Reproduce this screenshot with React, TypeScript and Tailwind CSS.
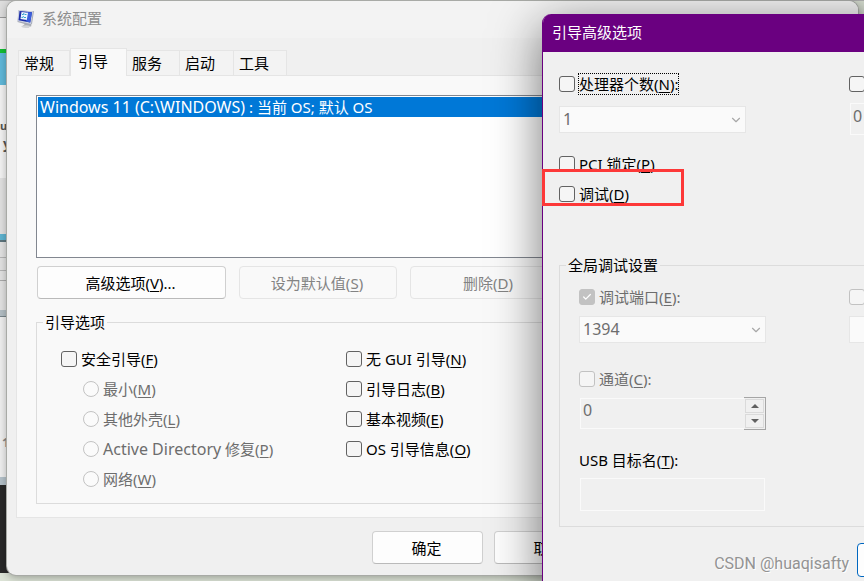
import { useId, type ReactNode } from "react";
import { Check, ChevronDown, X } from "lucide-react";

const strips = [
  "h-[17px] bg-[#dedede]",
  "h-px bg-[#9a9a9a]",
  "h-[31px] bg-[#efefef]",
  "h-[4px] bg-[#13bf33]",
  "h-[32px] bg-[#60b9da]",
  "h-[93px] bg-[#f4f4f4]",
  "h-[56px] bg-[#e2e2e2]",
  "h-[6px] bg-[#5fb4d1]",
  "h-[2px] bg-[#5d757d]",
  "h-[15px] bg-[#e3e3e3]",
  "h-px bg-[#b5b5b5]",
  "h-[12px] bg-[#e3e3e3]",
  "h-px bg-[#b5b5b5]",
  "h-[9px] bg-[#e3e3e3]",
  "h-px bg-[#aaaaaa]",
  "h-[29px] bg-[#e3e3e3]",
  "h-[6px] bg-[#b4bfc5]",
  "h-px bg-[#78858b]",
  "h-[160px] bg-[#f0f0f0]",
  "h-[8px] bg-[#b5c2ca]",
  "h-[88px] bg-[#292929]",
];

function Label({ text, hot, end = "" }: { text: ReactNode; hot?: string; end?: string }) {
  return (
    <span className="whitespace-pre">
      {text}
      {hot && (
        <>
          (<u className="underline decoration-1 underline-offset-2">{hot}</u>)
        </>
      )}
      {end}
    </span>
  );
}

type OptionProps = {
  children?: ReactNode;
  disabled?: boolean;
  checked?: boolean;
  focused?: boolean;
  name?: string;
};

function CheckOption({ children, disabled, checked, focused, name }: OptionProps) {
  const id = useId();
  return (
    <div className="flex h-[30px] items-center gap-1">
      <span className="relative flex size-4 shrink-0">
        <input
          id={id}
          type="checkbox"
          disabled={disabled}
          defaultChecked={checked}
          aria-label={name}
          className="size-4 appearance-none rounded-[3px] border border-[#626262] bg-[#f5f5f5] checked:border-[#c2c2c2] checked:bg-[#c2c2c2] disabled:border-[#c2c2c2]"
        />
        {checked && <Check className="pointer-events-none absolute inset-[3px] size-[10px] text-white" strokeWidth={3} />}
      </span>
      <label
        htmlFor={id}
        className={`-ml-px border border-dotted leading-5 ${focused ? "border-black" : "border-transparent"} ${disabled ? "text-[#6d6d6d]" : "text-black"}`}
      >
        {children}
      </label>
    </div>
  );
}

function RadioOption({ children }: { children: ReactNode }) {
  const id = useId();
  return (
    <div className="flex h-[30px] items-center gap-1 pl-[22px]">
      <input id={id} type="radio" name="safe-boot" disabled className="size-4 appearance-none rounded-full border border-[#c3c3c3] bg-[#fbfbfb]" />
      <label htmlFor={id} className="text-[#6d6d6d]">
        {children}
      </label>
    </div>
  );
}

function Combo({ value, name }: { value: string; name: string }) {
  return (
    <div className="relative w-[187px]">
      <select
        aria-label={name}
        disabled
        className="block h-[27px] w-full appearance-none border border-[#e6e6e6] bg-[#fafafa] pb-[2px] pl-[3px] text-base leading-5 text-[#6d6d6d] opacity-100"
      >
        <option>{value}</option>
      </select>
      <ChevronDown className="pointer-events-none absolute top-[7px] right-[3px] size-[14px] text-[#a8a8a8]" strokeWidth={2} />
    </div>
  );
}

function PushButton({ children, width, disabled }: { children: ReactNode; width: string; disabled?: boolean }) {
  return (
    <button
      type="button"
      disabled={disabled}
      className={`h-[33px] shrink-0 rounded-[4px] border pr-[2px] ${width} ${disabled ? "border-[#e5e5e5] bg-[#f9f9f9] text-[#838383]" : "border-[#d0d0d0] border-b-[#bababa] bg-[#fdfdfd] text-black"}`}
    >
      {children}
    </button>
  );
}

function MonitorIcon() {
  return (
    <svg viewBox="0 0 18 20" className="h-5 w-[18px]" aria-hidden="true">
      <path d="M9 14l4.500 1 1 2-3 1.500-6-1.500z" fill="#a9acb0" />
      <path d="M4 17.500q4-2 10-.5l-3 2q-5 0-7-1.500z" fill="#d2d4d7" />
      <path d="M1.500 1L15 2.500 17 2l-2 13-2 1.500L.5 13z" fill="#a6aab5" />
      <path d="M1.500 1L16 2.500l-2 12.500L.5 12z" fill="#cfd5e4" />
      <path d="M2.500 2L15 3.300l-1.800 10.200L1.500 11.300z" fill="#1d2ea8" />
      <path d="M10 3l5 .4-1.800 10-4.200-.8z" fill="#3c60dc" />
      <path d="M4.500 3l6.500.7-1.200 7.300-6.300-1z" fill="#eef7ff" />
      <path d="M5 5l1 1 1-2M4.500 8l1 1 1-2M7.500 5.500h2M7 8.500h2" stroke="#37a2cf" fill="none" />
    </svg>
  );
}

function Tab({ children, width, active }: { children: ReactNode; width: string; active?: boolean }) {
  return (
    <button
      type="button"
      role="tab"
      aria-selected={!!active}
      className={`border border-b-0 border-[#e5e5e5] text-left ${width} ${active ? "z-10 -mb-px h-[28px] bg-[#f9f9f9] pb-[3px] pl-[7px]" : "h-[25px] border-l-0 bg-[#f3f3f3] pl-[5px] first:border-l"}`}
    >
      {children}
    </button>
  );
}

function ConfigWindow() {
  return (
    <section className="absolute top-px right-[6px] left-[7px] overflow-hidden rounded-[9px] bg-[#f0f0f0] shadow-[0_2px_10px_rgba(0,0,0,0.35)] ring-1 ring-[#a8aaa6]">
      <header className="flex h-[37px] items-center bg-[#f3f3f3] pr-[14px] pb-[2px] pl-[10px] text-[#8e8e8e]">
        <MonitorIcon />
        <h1 className="ml-[7px] flex-1 pb-px">系统配置</h1>
        <button type="button" aria-label="关闭">
          <X size={16} strokeWidth={1} />
        </button>
      </header>
      <div className="px-[9px] pt-[10px] pb-[11px]">
        <div role="tablist" className="relative flex items-end pl-[2px]">
          <Tab width="w-[52px]">常规</Tab>
          <Tab width="w-[57px]" active>引导</Tab>
          <Tab width="w-[53px]">服务</Tab>
          <Tab width="w-[54px]">启动</Tab>
          <Tab width="w-[53px]">工具</Tab>
        </div>
        <div className="border border-[#e5e5e5] bg-[#f9f9f9] px-[19px] pt-[19px] pb-[13px]">
          <ul role="listbox" aria-label="操作系统" className="h-[163px] border border-[#828790] bg-white p-px">
            <li role="option" aria-selected="true" className="h-5 bg-[#0078d7] pl-[2px] leading-5 whitespace-pre text-white">
              <span className="text-base leading-5">Windows 11 (C:\WINDOWS)</span> : 当前 OS; 默认 OS
            </li>
          </ul>
          <div className="flex gap-[13px] pt-2 pl-px">
            <PushButton width="w-[189px]"><Label text="高级选项" hot="V" end="..." /></PushButton>
            <PushButton width="w-[158px]" disabled><Label text="设为默认值" hot="S" /></PushButton>
            <PushButton width="w-[158px]" disabled><Label text="删除" hot="D" /></PushButton>
          </div>
          <fieldset className="mt-[13px] flex border border-[#dcdcdc] pb-[9px] pl-6">
            <legend className="-ml-[18px] px-[2px] leading-5">引导选项</legend>
            <div className="w-[285px] pt-3">
              <CheckOption><Label text="安全引导" hot="F" /></CheckOption>
              <RadioOption><Label text="最小" hot="M" /></RadioOption>
              <RadioOption><Label text="其他外壳" hot="L" /></RadioOption>
              <RadioOption>
                <Label text={<><span className="text-base leading-5">Active Directory</span> 修复</>} hot="P" />
              </RadioOption>
              <RadioOption><Label text="网络" hot="W" /></RadioOption>
            </div>
            <div className="pt-3">
              <CheckOption><Label text="无 GUI 引导" hot="N" /></CheckOption>
              <CheckOption><Label text="引导日志" hot="B" /></CheckOption>
              <CheckOption><Label text="基本视频" hot="E" /></CheckOption>
              <CheckOption><Label text="OS 引导信息" hot="O" /></CheckOption>
            </div>
          </fieldset>
        </div>
        <div className="flex gap-[11px] pt-[13px] pl-[356px]">
          <PushButton width="w-[111px]">确定</PushButton>
          <PushButton width="w-[111px]">取消</PushButton>
        </div>
      </div>
    </section>
  );
}

function AdvancedDialog() {
  return (
    <section className="absolute top-[14px] left-[542px] w-[580px] overflow-hidden rounded-[9px] border border-t-0 border-[#6a0080] bg-[#f0f0f0] shadow-[0_12px_50px_rgba(0,0,0,0.55)]">
      <header className="flex h-[38px] items-center bg-[#6a0080] pb-[2px] pl-[9px] text-white">
        <h2>引导高级选项</h2>
      </header>
      <div className="px-4 pt-[17px] pb-5">
        <div className="flex">
          <div className="w-[290px]">
            <CheckOption focused><Label text="处理器个数" hot="N" end=":" /></CheckOption>
            <div className="pt-[7px]"><Combo value="1" name="处理器个数" /></div>
            <div className="pt-4">
              <CheckOption><Label text="PCI 锁定" hot="P" /></CheckOption>
              <CheckOption><Label text="调试" hot="D" /></CheckOption>
            </div>
          </div>
          <div className="w-[187px]">
            <CheckOption name="最大内存" />
            <input aria-label="内存大小" disabled defaultValue="0" className="mt-[4px] ml-px h-[32px] w-full border border-[#fafafa] pb-[7px] pl-[2px] text-base text-[#6d6d6d]" />
          </div>
        </div>
        <fieldset className="mt-[46px] border border-[#dcdcdc] pb-[15px] pl-[19px]">
          <legend className="-ml-[13px] px-[2px] leading-5">全局调试设置</legend>
          <div className="flex pt-[7px]">
            <div className="w-[270px]">
              <CheckOption disabled checked><Label text="调试端口" hot="E" end=":" /></CheckOption>
              <div className="pt-1"><Combo value="1394" name="调试端口" /></div>
              <div className="pt-[21px]"><CheckOption disabled><Label text="通道" hot="C" end=":" /></CheckOption></div>
              <div className="mt-[3px] flex h-[33px] w-[187px]">
                <input aria-label="通道" disabled defaultValue="0" className="my-px ml-px min-w-0 flex-1 border border-r-0 border-[#fafafa] pb-[7px] pl-[2px] text-base text-[#6d6d6d]" />
                <div className="flex w-[22px] flex-col gap-px border border-l-0 border-[#a5a5a5] p-px">
                  <button type="button" disabled aria-label="增加" className="flex flex-1 items-center justify-center border border-[#dadada]">
                    <svg viewBox="0 0 8 4" className="h-1 w-2"><path d="M0 4L4 0l4 4z" fill="#606060" /></svg>
                  </button>
                  <button type="button" disabled aria-label="减少" className="flex flex-1 items-center justify-center border border-[#dadada]">
                    <svg viewBox="0 0 8 4" className="h-1 w-2"><path d="M0 0l4 4 4-4z" fill="#606060" /></svg>
                  </button>
                </div>
              </div>
              <label htmlFor="usb-target" className="mt-5 block leading-5"><Label text="USB 目标名" hot="T" end=":" /></label>
              <input id="usb-target" disabled className="mt-[8px] ml-px block h-[33px] w-[185px] border border-[#fafafa]" />
            </div>
            <div>
              <CheckOption disabled name="波特率" />
              <div className="pt-1"><Combo value="" name="波特率" /></div>
            </div>
          </div>
        </fieldset>
        <div className="flex gap-[11px] pt-4 pl-[298px]">
          <button type="button" aria-label="确定" className="h-[34px] w-[111px] rounded-[4px] border border-[#0067c0] bg-[#fdfdfd]" />
        </div>
      </div>
    </section>
  );
}

export default function App() {
  return (
    <main className="relative h-screen overflow-hidden bg-[#dce3d6] font-['Noto_Sans','Noto_Sans_CJK_SC',sans-serif] text-[15px] leading-5 text-black">
      <div className="w-[40px]">
        {strips.map((strip, i) => (
          <div key={i} className={strip} />
        ))}
      </div>
      <span className="absolute top-[116px] left-0 text-[11px] font-bold text-[#555]">u</span>
      <span className="absolute top-[134px] left-[3px] text-[14px] font-bold text-[#555]">y</span>
      <span className="absolute top-[432px] left-[2px] text-[13px] font-bold text-[#888]">1</span>
      <div className="absolute inset-x-0 top-0 flex h-px">
        <div className="w-[535px] bg-[#b5b5b5]" />
        <div className="w-[84px] bg-[#444]" />
        <div className="flex-1 bg-[#b5b5b5]" />
      </div>
      <ConfigWindow />
      <AdvancedDialog />
      <div className="absolute top-[169px] left-[542px] h-[37px] w-[142px] border-[3px] border-[#fd3838]" />
      <p className="absolute right-[15px] bottom-[7px] font-[Roboto,sans-serif] text-[16px] text-[#939393] [text-shadow:1px_1px_0_#fff]">CSDN @huaqisafty</p>
    </main>
  );
}
